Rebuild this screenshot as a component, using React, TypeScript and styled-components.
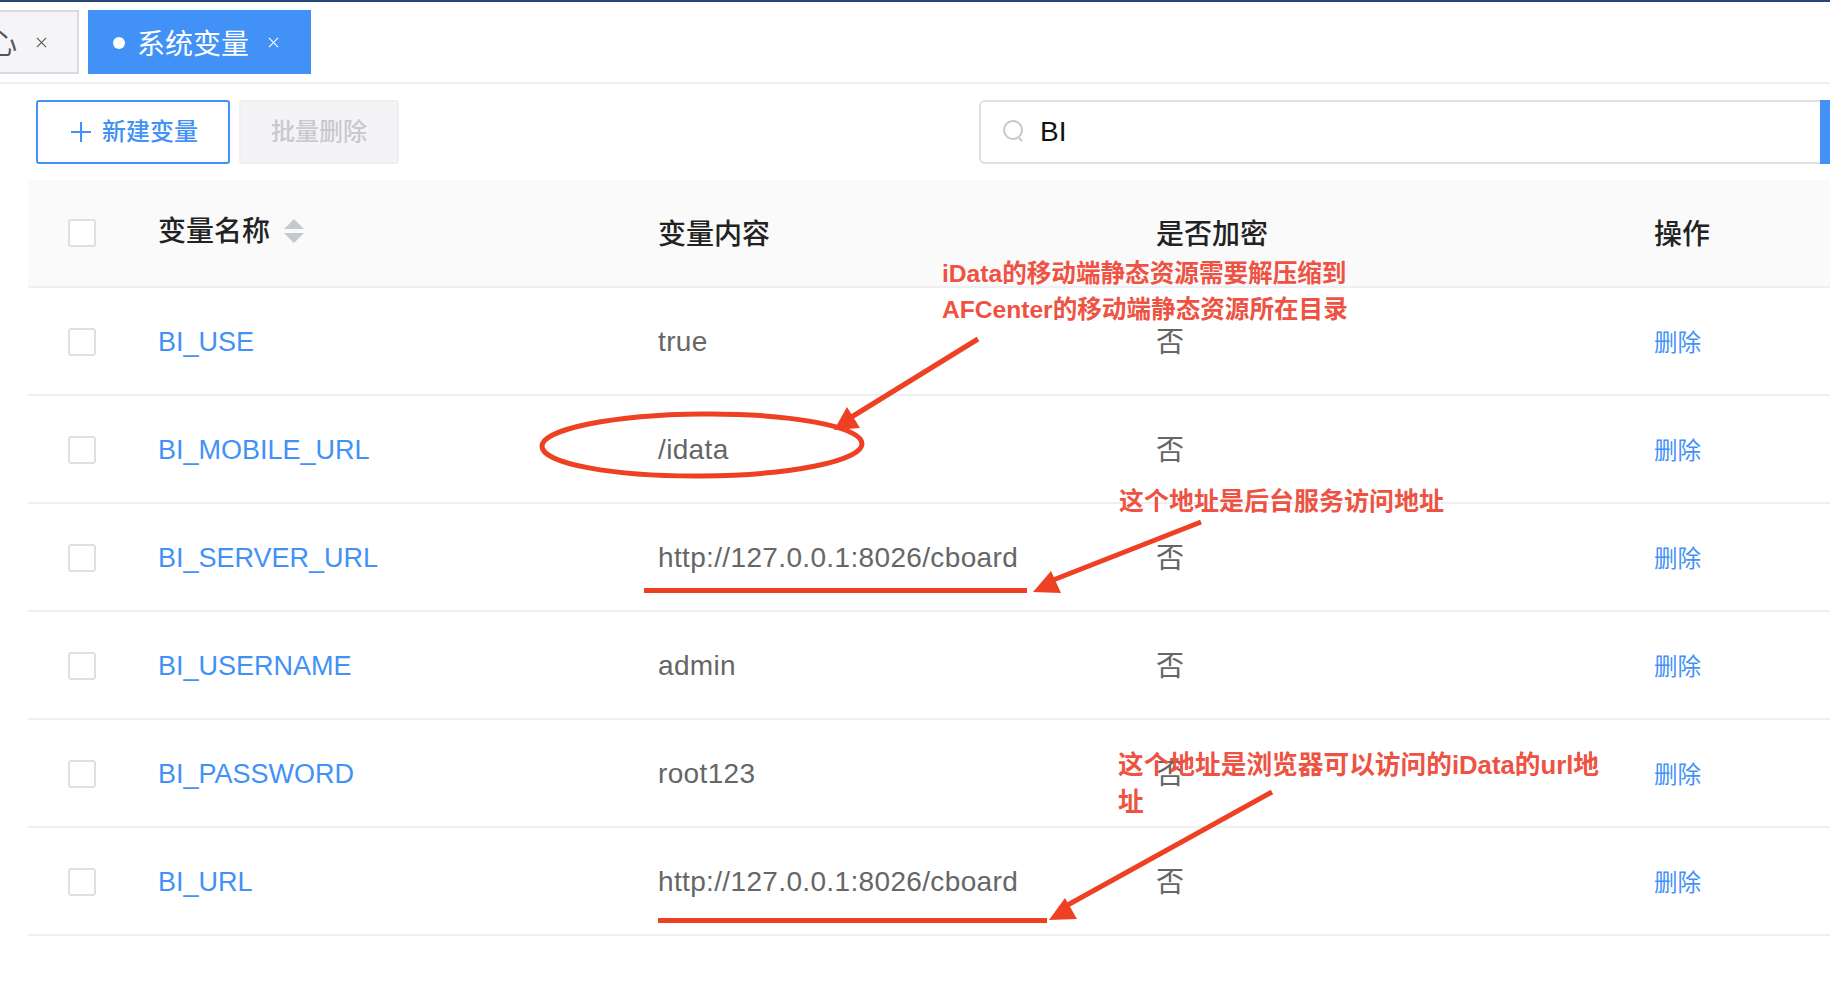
import styled, { createGlobalStyle } from "styled-components";

const GlobalStyle = createGlobalStyle`
  html, body {
    margin: 0;
    padding: 0;
    background: #fff;
    overflow: hidden;
  }
  * {
    box-sizing: border-box;
  }
`;

const Page = styled.div`
  position: relative;
  width: 1830px;
  height: 982px;
  overflow: hidden;
  border-top: 2px solid #2a4673;
  font-family: "Liberation Sans", "Noto Sans CJK SC", sans-serif;
  color: #666;
`;

const TabBar = styled.div`
  display: flex;
  gap: 9px;
  height: 82px;
  padding-top: 8px;
  border-bottom: 2px solid #eeeef3;
`;

const Tab = styled.div<{ $active?: boolean }>`
  display: flex;
  align-items: center;
  justify-content: flex-end;
  height: 64px;
  overflow: hidden;
  white-space: nowrap;
  font-size: 28px;
  color: ${(p) => (p.$active ? "#fff" : "#555")};
  background: ${(p) => (p.$active ? "#4291f7" : "#f5f5f7")};
  border: ${(p) => (p.$active ? "none" : "2px solid #d9d9e0")};
  border-left: none;
  width: ${(p) => (p.$active ? "223px" : "79px")};
  padding-right: ${(p) => (p.$active ? "32px" : "30px")};
`;

const TabDot = styled.span`
  width: 12px;
  height: 12px;
  margin-top: 2px;
  margin-right: 12px;
  border-radius: 50%;
  background: #fff;
`;

const TabClose = styled.svg`
  margin-left: 19px;
  flex: none;
`;

const Toolbar = styled.div`
  display: flex;
  align-items: stretch;
  height: 64px;
  margin-top: 16px;
  padding-left: 36px;
`;

const PrimaryButton = styled.div`
  display: flex;
  align-items: center;
  gap: 11px;
  width: 194px;
  padding-left: 33px;
  border: 2px solid #4291f7;
  border-radius: 3px;
  color: #4291f7;
  font-size: 24px;
  font-weight: 500;
`;

const ButtonLabel = styled.span`
  margin-bottom: 5px;
`;

const DisabledButton = styled.div`
  display: flex;
  align-items: center;
  justify-content: center;
  width: 160px;
  margin-left: 9px;
  border: 2px solid #efeff2;
  border-radius: 3px;
  background: #f4f4f6;
  color: #c8c9ce;
  font-size: 24px;
  font-weight: 500;
`;

const SearchBox = styled.div`
  display: flex;
  align-items: center;
  gap: 14px;
  width: 841px;
  margin-left: 580px;
  padding-left: 21px;
  border: 2px solid #e0e0e3;
  border-right: none;
  border-radius: 6px 0 0 6px;
  color: #111;
  font-size: 28px;
`;

const SearchButton = styled.div`
  width: 10px;
  background: #4291f7;
`;

const Table = styled.div`
  margin: 16px 0 0 28px;
`;

const Row = styled.div<{ $head?: boolean }>`
  display: grid;
  grid-template-columns: 90px 500px 498px 498px 1fr;
  align-items: center;
  height: 108px;
  padding-left: 40px;
  background: ${(p) => (p.$head ? "#fafafb" : "#fff")};
  border-bottom: 2px solid #eeeef3;
  font-size: 28px;
`;

const Checkbox = styled.span`
  display: block;
  width: 28px;
  height: 28px;
  border: 2px solid #dfe0e4;
  border-radius: 3px;
  background: #fff;
`;

const RowCheckbox = styled(Checkbox)`
  margin-top: 2px;
`;

const HeadCell = styled.span`
  display: flex;
  align-items: center;
  gap: 14px;
  margin-bottom: 3px;
  font-size: 28px;
  font-weight: 500;
  color: #222;
`;

const NameHeadCell = styled(HeadCell)`
  margin-bottom: 5px;
`;

const HeadLabel = styled.span`
  margin-bottom: 4px;
`;

const NameLink = styled.span`
  margin-top: 2px;
  font-size: 27px;
  color: #4291f7;
`;

const ValueCell = styled.span`
  margin-top: 2px;
  letter-spacing: 0.35px;
  color: #666;
`;

const FlagCell = styled.span`
  margin-bottom: 2px;
  color: #666;
`;

const DeleteLink = styled.span`
  color: #4291f7;
  font-size: 23.5px;
`;

const Marks = styled.svg`
  position: absolute;
  left: 0;
  top: -2px;
  pointer-events: none;
`;

const Note = styled.div<{ $x: number; $y: number; $w: number; $lh: number; $size: number }>`
  position: absolute;
  left: ${(p) => p.$x}px;
  top: ${(p) => p.$y}px;
  width: ${(p) => p.$w}px;
  line-height: ${(p) => p.$lh}px;
  font-size: ${(p) => p.$size}px;
  font-weight: 600;
  color: #ee5242;
`;

const rows = [
  { name: "BI_USE", value: "true" },
  { name: "BI_MOBILE_URL", value: "/idata" },
  { name: "BI_SERVER_URL", value: "http://127.0.0.1:8026/cboard" },
  { name: "BI_USERNAME", value: "admin" },
  { name: "BI_PASSWORD", value: "root123" },
  { name: "BI_URL", value: "http://127.0.0.1:8026/cboard" },
];

const CloseIcon = ({ color }: { color: string }) => (
  <TabClose width={11} height={11} viewBox="0 0 12 12" fill="none" stroke={color} strokeWidth="1.2">
    <path d="M1 1l10 10M11 1L1 11" />
  </TabClose>
);

export default function App() {
  return (
    <Page>
      <GlobalStyle />
      <TabBar>
        <Tab>
          心
          <CloseIcon color="#555" />
        </Tab>
        <Tab $active>
          <TabDot />
          系统变量
          <CloseIcon color="#fff" />
        </Tab>
      </TabBar>
      <Toolbar>
        <PrimaryButton>
          <svg width="20" height="20" viewBox="0 0 20 20" stroke="#4291f7" strokeWidth="2">
            <path d="M10 0v20M0 10h20" />
          </svg>
          <ButtonLabel>新建变量</ButtonLabel>
        </PrimaryButton>
        <DisabledButton>
          <ButtonLabel>批量删除</ButtonLabel>
        </DisabledButton>
        <SearchBox>
          <svg width="24" height="24" viewBox="0 0 24 24" fill="none" stroke="#c5c8ce" strokeWidth="2">
            <circle cx="11" cy="10" r="9" />
            <path d="M17 18l3 3" />
          </svg>
          BI
        </SearchBox>
        <SearchButton />
      </Toolbar>
      <Table>
        <Row $head>
          <Checkbox />
          <NameHeadCell>
            <HeadLabel>变量名称</HeadLabel>
            <svg width="20" height="24" viewBox="0 0 20 24" fill="#c5c8ce">
              <path d="M10 0l10 10H0zM10 24L0 14h20z" />
            </svg>
          </NameHeadCell>
          <HeadCell>变量内容</HeadCell>
          <HeadCell>是否加密</HeadCell>
          <HeadCell>操作</HeadCell>
        </Row>
        {rows.map((row) => (
          <Row key={row.name}>
            <RowCheckbox />
            <NameLink>{row.name}</NameLink>
            <ValueCell>{row.value}</ValueCell>
            <FlagCell>否</FlagCell>
            <DeleteLink>删除</DeleteLink>
          </Row>
        ))}
      </Table>
      <Marks width="1830" height="982" viewBox="0 0 1830 982" fill="none" stroke="#ee4023" strokeWidth="5">
        <ellipse cx="702" cy="445" rx="160" ry="31" transform="rotate(-0.5 702 445)" />
        <path d="M644 590.5h383M658 920.5h389" />
        <path d="M978 339L845 421M1201 522L1048 582M1272 792L1064 907" />
        <path fill="#ee4023" stroke="none" d="M834 430l13-23 13 21zM1033 592l18-21 10 22zM1049 920l16-22 12 21z" />
      </Marks>
      <Note $x={942} $y={254} $w={430} $lh={36} $size={24.6}>
        iData的移动端静态资源需要解压缩到
        <br />
        AFCenter的移动端静态资源所在目录
      </Note>
      <Note $x={1119} $y={481} $w={360} $lh={36} $size={25}>
        这个地址是后台服务访问地址
      </Note>
      <Note $x={1118} $y={745} $w={490} $lh={37} $size={25.7}>
        这个地址是浏览器可以访问的iData的url地址
      </Note>
    </Page>
  );
}
